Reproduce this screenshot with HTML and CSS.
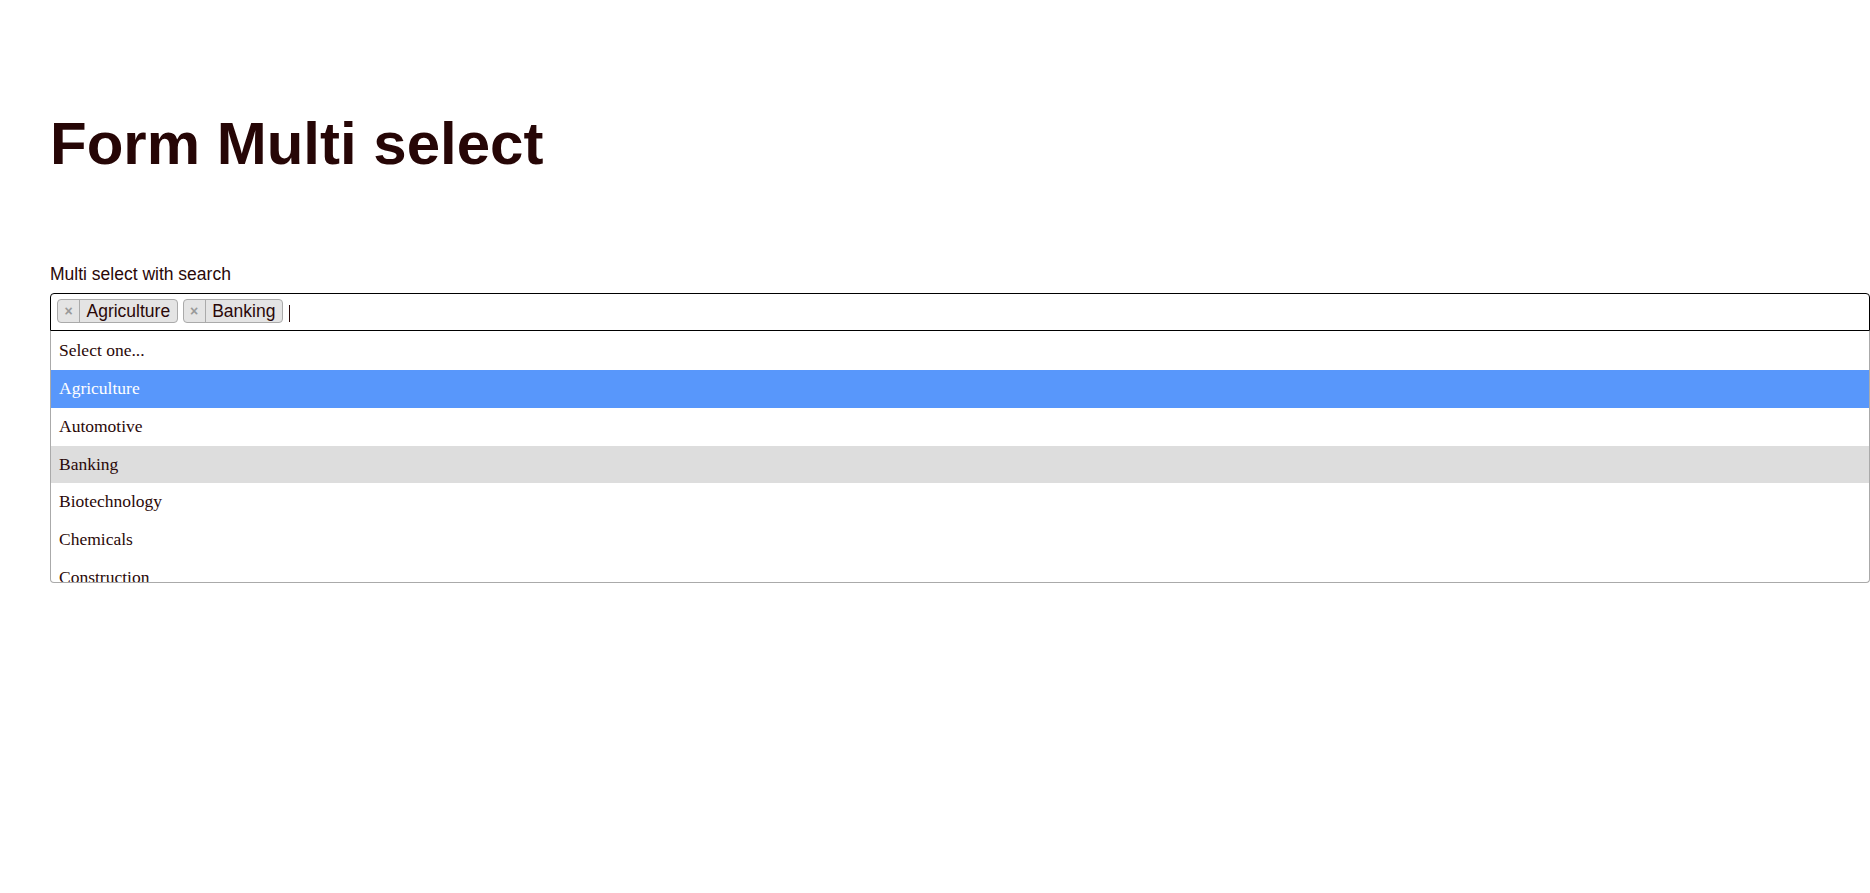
FILE: index.html
```html
<!DOCTYPE html>
<html lang="en">
<head>
<meta charset="utf-8">
<title>Form Multi select</title>
<link rel="stylesheet" href="styles.css">
</head>
<body>
<main class="page">
  <h1 class="title">Form Multi select</h1>
  <label class="field-label">Multi select with search</label>
  <div class="multiselect">
    <div class="selection">
      <span class="tag"><span class="tag-remove">×</span><span class="tag-text">Agriculture</span></span>
      <span class="tag"><span class="tag-remove">×</span><span class="tag-text">Banking</span></span>
      <span class="caret"></span>
    </div>
    <ul class="results">
      <li class="option">Select one...</li>
      <li class="option highlighted">Agriculture</li>
      <li class="option">Automotive</li>
      <li class="option selected">Banking</li>
      <li class="option">Biotechnology</li>
      <li class="option">Chemicals</li>
      <li class="option">Construction</li>
    </ul>
  </div>
</main>
</body>
</html>
```

FILE: styles.css
```css
html, body {
  margin: 0;
  padding: 0;
  background: #ffffff;
}

body {
  color: #2a0808;
  font-family: "Liberation Sans", Arial, sans-serif;
  overflow: hidden;
}

.page {
  padding-left: 50px;
  display: flex;
  flex-direction: column;
  align-items: stretch;
}

.title {
  margin: 109px 0 0 0;
  font-size: 60px;
  line-height: 69px;
  font-weight: 700;
  color: #260606;
}

.field-label {
  display: block;
  margin-top: 86px;
  font-size: 17.5px;
  line-height: 20px;
  height: 20px;
}

.multiselect {
  margin-top: 9px;
  display: flex;
  flex-direction: column;
}

.selection {
  box-sizing: border-box;
  height: 38px;
  border: 1px solid #000;
  border-radius: 4px 4px 0 0;
  display: flex;
  align-items: flex-start;
  gap: 5px;
  padding: 5px 0 0 6px;
}

.tag {
  box-sizing: border-box;
  height: 24px;
  display: inline-flex;
  align-items: stretch;
  background: #e4e4e4;
  border: 1px solid #aaa;
  border-radius: 4px;
  font-size: 17.5px;
  line-height: 22px;
  color: #2a0808;
}

.tag-remove {
  width: 21px;
  border-right: 1px solid #aaa;
  color: #999;
  font-weight: 700;
  font-size: 14px;
  text-align: center;
  line-height: 22px;
}

.tag-text {
  padding: 0 6.5px;
}

.caret {
  width: 1px;
  height: 17px;
  margin: 6px 0 0 1px;
  background: #2a0808;
}

.results {
  list-style: none;
  margin: 0;
  padding: 0;
  box-sizing: border-box;
  height: 252px;
  overflow: hidden;
  border: 1px solid #aaa;
  border-top: none;
  border-radius: 0 0 4px 4px;
  font-family: "Liberation Serif", "Times New Roman", serif;
  font-size: 17.5px;
  color: #2a0808;
}

.option {
  box-sizing: border-box;
  height: 37.75px;
  line-height: 37.75px;
  padding: 0 8px;
  white-space: nowrap;
}

.option:first-child {
  height: 39px;
  line-height: 39px;
}

.option.highlighted {
  background: #5897fb;
  color: #ffffff;
}

.option.selected {
  background: #dddddd;
}
```
